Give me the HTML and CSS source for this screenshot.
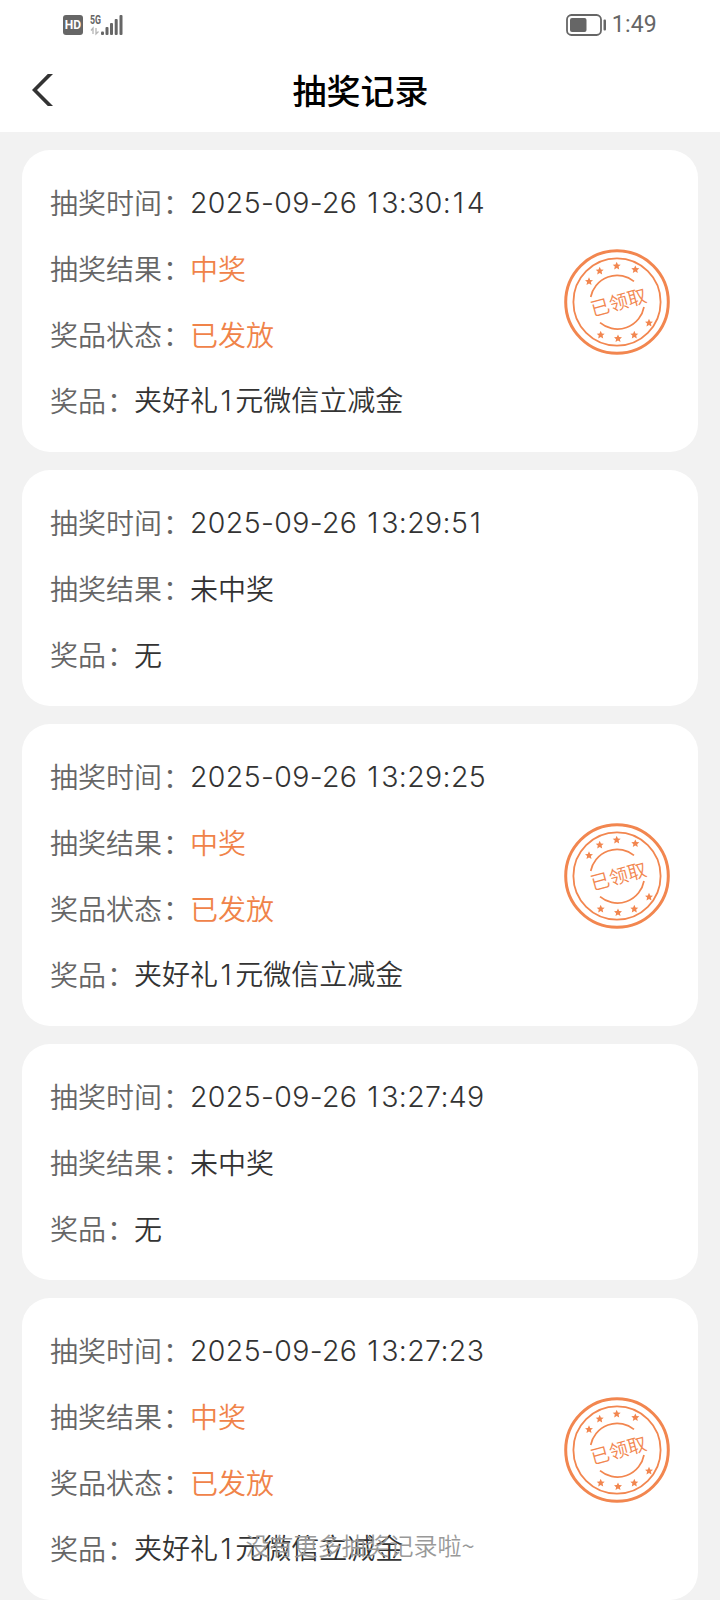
FILE: index.html
```html
<!DOCTYPE html>
<html lang="zh-CN">
<head>
    <meta charset="UTF-8">
    <meta name="viewport" content="width=device-width, initial-scale=1.0">
    <title>抽奖记录</title>
    <link rel="stylesheet" href="styles.css">
</head>
<body>
    <!-- shared symbols -->
    <svg class="defs" width="0" height="0">
        <symbol id="star" viewBox="-5 -5 10 10">
            <path d="M0-4.2 1.2-1.5 4-1.3 1.9.6 2.5 3.4 0 1.9-2.5 3.4-1.9.6-4-1.3-1.2-1.5Z"/>
        </symbol>
        <symbol id="stamp" viewBox="0 0 108 108">
            <g fill="none" stroke="currentColor">
                <circle cx="54" cy="54" r="51.3" stroke-width="3"/>
                <circle cx="54" cy="54" r="43.6" stroke-width="1.8"/>
                <path d="M27.7 49A27 27 0 0 1 71 33.3" stroke-width="1.7"/>
                <path d="M37 74.6A27 27 0 0 0 81 59" stroke-width="1.7"/>
            </g>
            <g fill="currentColor">
                <use href="#star" x="21" y="28.5" width="10" height="10"/>
                <use href="#star" x="31.7" y="18" width="10" height="10"/>
                <use href="#star" x="48.7" y="13" width="10" height="10"/>
                <use href="#star" x="67.3" y="16.6" width="10" height="10"/>
                <use href="#star" x="81" y="70" width="10" height="10"/>
                <use href="#star" x="66.3" y="82" width="10" height="10"/>
                <use href="#star" x="50" y="85.6" width="10" height="10"/>
                <use href="#star" x="32.7" y="82" width="10" height="10"/>
                <text class="stamp-text" x="55.6" y="61.3" text-anchor="middle" transform="rotate(-15 55.6 54.4)">已领取</text>
            </g>
        </symbol>
    </svg>

    <div class="status-bar">
        <div class="status-left">
            <span class="hd">HD</span>
            <svg class="signal" width="34" height="22" viewBox="0 0 34 22">
                <text class="net" x="0" y="9.5" textLength="11" lengthAdjust="spacingAndGlyphs">5G</text>
                <path d="M1 16.5 3 14V20M6 14V20L8.5 17.5" fill="none" stroke="#b5b5b5" stroke-width="1.3"/>
                <g fill="#666">
                    <rect x="11" y="17.5" width="3" height="3.5" rx="1"/>
                    <rect x="15.5" y="13" width="3" height="8" rx="1"/>
                    <rect x="20" y="9" width="3" height="12" rx="1"/>
                    <rect x="24.7" y="5" width="3" height="16" rx="1"/>
                    <rect x="29.5" y="1" width="3" height="20" rx="1"/>
                </g>
            </svg>
        </div>
        <div class="status-right">
            <svg width="42" height="22" viewBox="0 0 42 22">
                <rect x="1" y="1" width="34" height="20" rx="4.5" fill="none" stroke="#666" stroke-width="1.8"/>
                <rect x="4" y="4" width="16.5" height="14" rx="2" fill="#666"/>
                <rect x="37.5" y="5.5" width="2.5" height="11" rx="1" fill="#666"/>
            </svg>
            <span class="clock">1:49</span>
        </div>
    </div>

    <div class="nav">
        <svg class="back" width="24" height="32" viewBox="0 0 24 32">
            <path d="M17.8 0H23L7 16 23 32H17.8L2 16Z" fill="#333"/>
        </svg>
        <h1>抽奖记录</h1>
    </div>

    <div class="list">
        <div class="card">
            <div class="info">
                <div class="row"><span class="label">抽奖时间<i>：</i></span><span class="num">2025-09-26 <b>1</b>3:30:<b>1</b>4</span></div>
                <div class="row"><span class="label">抽奖结果<i>：</i></span><span class="win">中奖</span></div>
                <div class="row"><span class="label">奖品状态<i>：</i></span><span class="win">已发放</span></div>
                <div class="row"><span class="label">奖品<i>：</i></span><span>夹好礼<span class="num"><b>1</b></span>元微信立减金</span></div>
            </div>
            <svg class="stamp" width="108" height="108"><use href="#stamp"/></svg>
        </div>

        <div class="card">
            <div class="info">
                <div class="row"><span class="label">抽奖时间<i>：</i></span><span class="num">2025-09-26 <b>1</b>3:29:5<b>1</b></span></div>
                <div class="row"><span class="label">抽奖结果<i>：</i></span><span>未中奖</span></div>
                <div class="row"><span class="label">奖品<i>：</i></span><span>无</span></div>
            </div>
        </div>

        <div class="card">
            <div class="info">
                <div class="row"><span class="label">抽奖时间<i>：</i></span><span class="num">2025-09-26 <b>1</b>3:29:25</span></div>
                <div class="row"><span class="label">抽奖结果<i>：</i></span><span class="win">中奖</span></div>
                <div class="row"><span class="label">奖品状态<i>：</i></span><span class="win">已发放</span></div>
                <div class="row"><span class="label">奖品<i>：</i></span><span>夹好礼<span class="num"><b>1</b></span>元微信立减金</span></div>
            </div>
            <svg class="stamp" width="108" height="108"><use href="#stamp"/></svg>
        </div>

        <div class="card">
            <div class="info">
                <div class="row"><span class="label">抽奖时间<i>：</i></span><span class="num">2025-09-26 <b>1</b>3:27:49</span></div>
                <div class="row"><span class="label">抽奖结果<i>：</i></span><span>未中奖</span></div>
                <div class="row"><span class="label">奖品<i>：</i></span><span>无</span></div>
            </div>
        </div>

        <div class="card">
            <div class="info">
                <div class="row"><span class="label">抽奖时间<i>：</i></span><span class="num">2025-09-26 <b>1</b>3:27:23</span></div>
                <div class="row"><span class="label">抽奖结果<i>：</i></span><span class="win">中奖</span></div>
                <div class="row"><span class="label">奖品状态<i>：</i></span><span class="win">已发放</span></div>
                <div class="row"><span class="label">奖品<i>：</i></span><span>夹好礼<span class="num"><b>1</b></span>元微信立减金</span></div>
            </div>
            <svg class="stamp" width="108" height="108"><use href="#stamp"/></svg>
        </div>
    </div>

    <div class="no-more">没有更多抽奖记录啦~</div>
</body>
</html>
```
FILE: styles.css
```css
* {
    box-sizing: border-box;
}
body {
    margin: 0;
    height: 1600px;
    overflow: hidden;
    position: relative;
    background-color: #f2f2f2;
    color: #333;
    font-family: "Noto Sans CJK SC", sans-serif;
    font-size: 28px;
    font-weight: 350;
}
.defs {
    position: absolute;
}
.status-bar {
    display: flex;
    justify-content: space-between;
    align-items: center;
    height: 48px;
    padding: 1px 63px 0 63px;
    background-color: #fff;
    color: #666;
}
.status-left,
.status-right {
    display: flex;
    align-items: center;
}
.hd {
    width: 20px;
    height: 20px;
    margin-right: 7px;
    border-radius: 3px;
    background-color: #666;
    color: #fff;
    font: 700 12px/20px Roboto, sans-serif;
    text-align: center;
}
.signal {
    overflow: visible;
}
.net {
    font: 700 13px Roboto, sans-serif;
    fill: #666;
}
.clock {
    margin-left: 4px;
    padding-top: 1px;
    font: 400 23px/30px Roboto, sans-serif;
    letter-spacing: 0.2px;
}
.nav {
    display: flex;
    align-items: center;
    height: 84px;
    padding: 0 30px;
    background-color: #fff;
}
.nav h1 {
    flex: 1;
    margin: 0 23px 0 0;
    color: #000;
    font-size: 34px;
    font-weight: 500;
    line-height: 50px;
    text-align: center;
}
.list {
    display: flex;
    flex-direction: column;
    gap: 18px;
    padding: 18px 22px 0;
}
.card {
    display: flex;
    justify-content: space-between;
    align-items: center;
    padding: 19px 27px 19px 28px;
    border-radius: 28px;
    background-color: #fff;
}
.row {
    display: flex;
    align-items: center;
    height: 66px;
    padding-bottom: 1px;
    line-height: 40px;
    white-space: nowrap;
}
.label {
    color: #666;
}
.label i {
    margin: 0 -1px 0 1px;
    font-style: normal;
}
.num {
    font-family: Inter, sans-serif;
    font-size: 28.5px;
}
.num b {
    padding: 0 3.5px 0 2.5px;
    font-weight: inherit;
}
.row > .num {
    padding-top: 2px;
    letter-spacing: 0.35px;
}
.row > .num b {
    padding: 0 2.5px 0 1.5px;
}
.win {
    color: #f08349;
}
.stamp {
    margin-top: 2px;
    color: #f2864f;
}
.stamp-text {
    font-size: 19px;
}
/* sits over the last card */
.no-more {
    position: absolute;
    left: 0;
    right: 0;
    bottom: 37px;
    color: #999;
    font-size: 24px;
    line-height: 36px;
    text-align: center;
}
```
